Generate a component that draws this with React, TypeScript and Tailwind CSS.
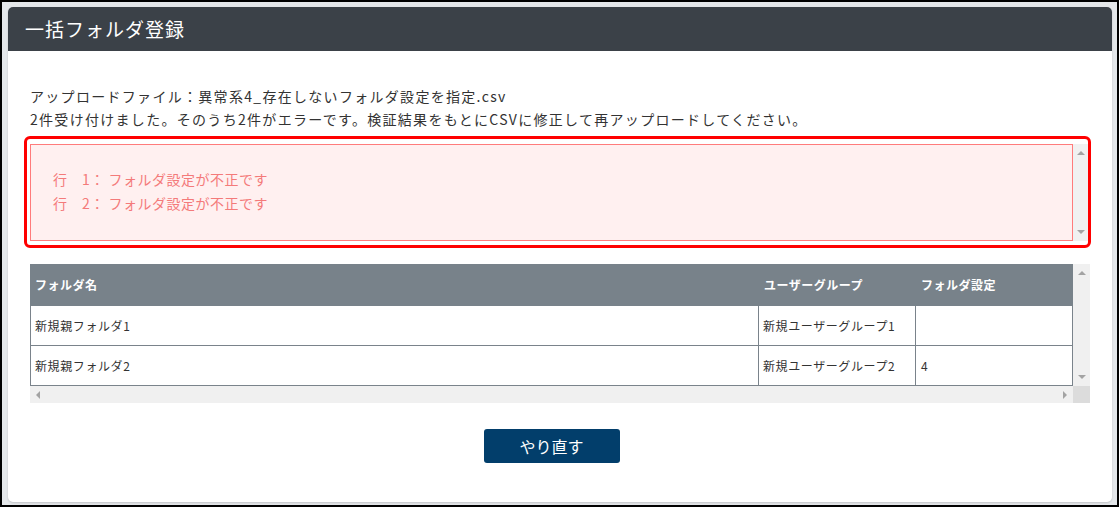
import React from 'react';

const font = { fontFamily: '"Noto Sans CJK JP", "Noto Sans", sans-serif' };

const Tri = ({ dir }: { dir: 'up' | 'down' | 'left' | 'right' }) => {
  const pts = {
    up: '0,5 4,1 8,5',
    down: '0,1 4,5 8,1',
    left: '5,0 1,4 5,8',
    right: '1,0 5,4 1,8',
  }[dir];
  const w = dir === 'up' || dir === 'down' ? 8 : 6;
  const h = dir === 'up' || dir === 'down' ? 6 : 8;
  return (
    <svg width={w} height={h} viewBox={`0 0 ${w} ${h}`}>
      <polygon points={pts} fill="#a3a3a3" />
    </svg>
  );
};

const rows = [
  { name: '新規親フォルダ1', group: '新規ユーザーグループ1', setting: '' },
  { name: '新規親フォルダ2', group: '新規ユーザーグループ2', setting: '4' },
];

export default function App() {
  return (
    <div className="w-[1119px] h-[507px] bg-black p-[2px]" style={font}>
      <div className="w-full h-full bg-[#e4e7ea] pl-[6px] pt-[5px] pr-[5px] pb-[3px]">
        <div className="h-full bg-white rounded-[5px] shadow-[0_1px_2px_rgba(0,0,0,0.15)] flex flex-col">
          {/* header */}
          <div className="h-[44px] bg-[#3b4148] rounded-t-[5px] flex items-center pl-[17px]">
            <h1 className="text-[19px] text-white font-normal tracking-[1px]">一括フォルダ登録</h1>
          </div>

          <div className="pl-[16px] pr-[21px] pt-[34px]">
            <div className="pl-[6px] text-[14px] text-[#333] leading-[23px] tracking-[1.3px]">
              <p>アップロードファイル：異常系4_存在しないフォルダ設定を指定.csv</p>
              <p>2件受け付けました。そのうち2件がエラーです。検証結果をもとにCSVに修正して再アップロードしてください。</p>
            </div>

            {/* error box */}
            <div className="mt-[5px] border-[3px] border-[#ff0000] rounded-[6px] pl-[3px] pt-[5px] pb-[4px] flex">
              <div className="flex-1 h-[97px] bg-[#fff0f0] border border-[#ff7b7b] pl-[22px] pt-[22px] text-[14px] leading-[24px] tracking-[0.5px] text-[#f47a7a]">
                <p>行　1：&nbsp;フォルダ設定が不正です</p>
                <p>行　2：&nbsp;フォルダ設定が不正です</p>
              </div>
              <div className="w-[15px] h-[97px] bg-[#f1f1f1] flex flex-col items-center justify-between py-[6px]">
                <Tri dir="up" />
                <Tri dir="down" />
              </div>
            </div>

            {/* table */}
            <div className="mt-[16px] ml-[6px] flex flex-col">
              <div className="flex">
                <div className="w-[1043px]">
                  <div className="h-[42px] bg-[#78828a] flex items-center text-white text-[12px] font-bold tracking-[0.5px]">
                    <div className="w-[729px] pl-[5px]">フォルダ名</div>
                    <div className="w-[157px] pl-[5px]">ユーザーグループ</div>
                    <div className="w-[157px] pl-[5px]">フォルダ設定</div>
                  </div>
                  {rows.map((r) => (
                    <div key={r.name} className="h-[40px] flex border-l border-r border-b border-[#7a838b] text-[12px] text-[#333] tracking-[0.6px]">
                      <div className="w-[728px] pl-[4px] flex items-center border-r border-[#7a838b]">{r.name}</div>
                      <div className="w-[157px] pl-[4px] flex items-center border-r border-[#7a838b]">{r.group}</div>
                      <div className="flex-1 pl-[5px] flex items-center">{r.setting}</div>
                    </div>
                  ))}
                </div>
                <div className="w-[17px] bg-[#f0f0f0] flex flex-col items-center justify-between pt-[6px] pb-[6px]">
                  <Tri dir="up" />
                  <Tri dir="down" />
                </div>
              </div>
              <div className="flex h-[17px]">
                <div className="w-[1043px] bg-[#f0f0f0] flex items-center justify-between px-[5px]">
                  <Tri dir="left" />
                  <Tri dir="right" />
                </div>
                <div className="w-[17px] bg-[#dcdcdc]" />
              </div>
            </div>

            {/* button */}
            <div className="ml-[6px] w-[1043px] flex justify-center mt-[26px]">
              <button className="w-[136px] h-[34px] bg-[#023e6b] rounded-[3px] text-white text-[16px]">
                やり直す
              </button>
            </div>
          </div>
        </div>
      </div>
    </div>
  );
}
